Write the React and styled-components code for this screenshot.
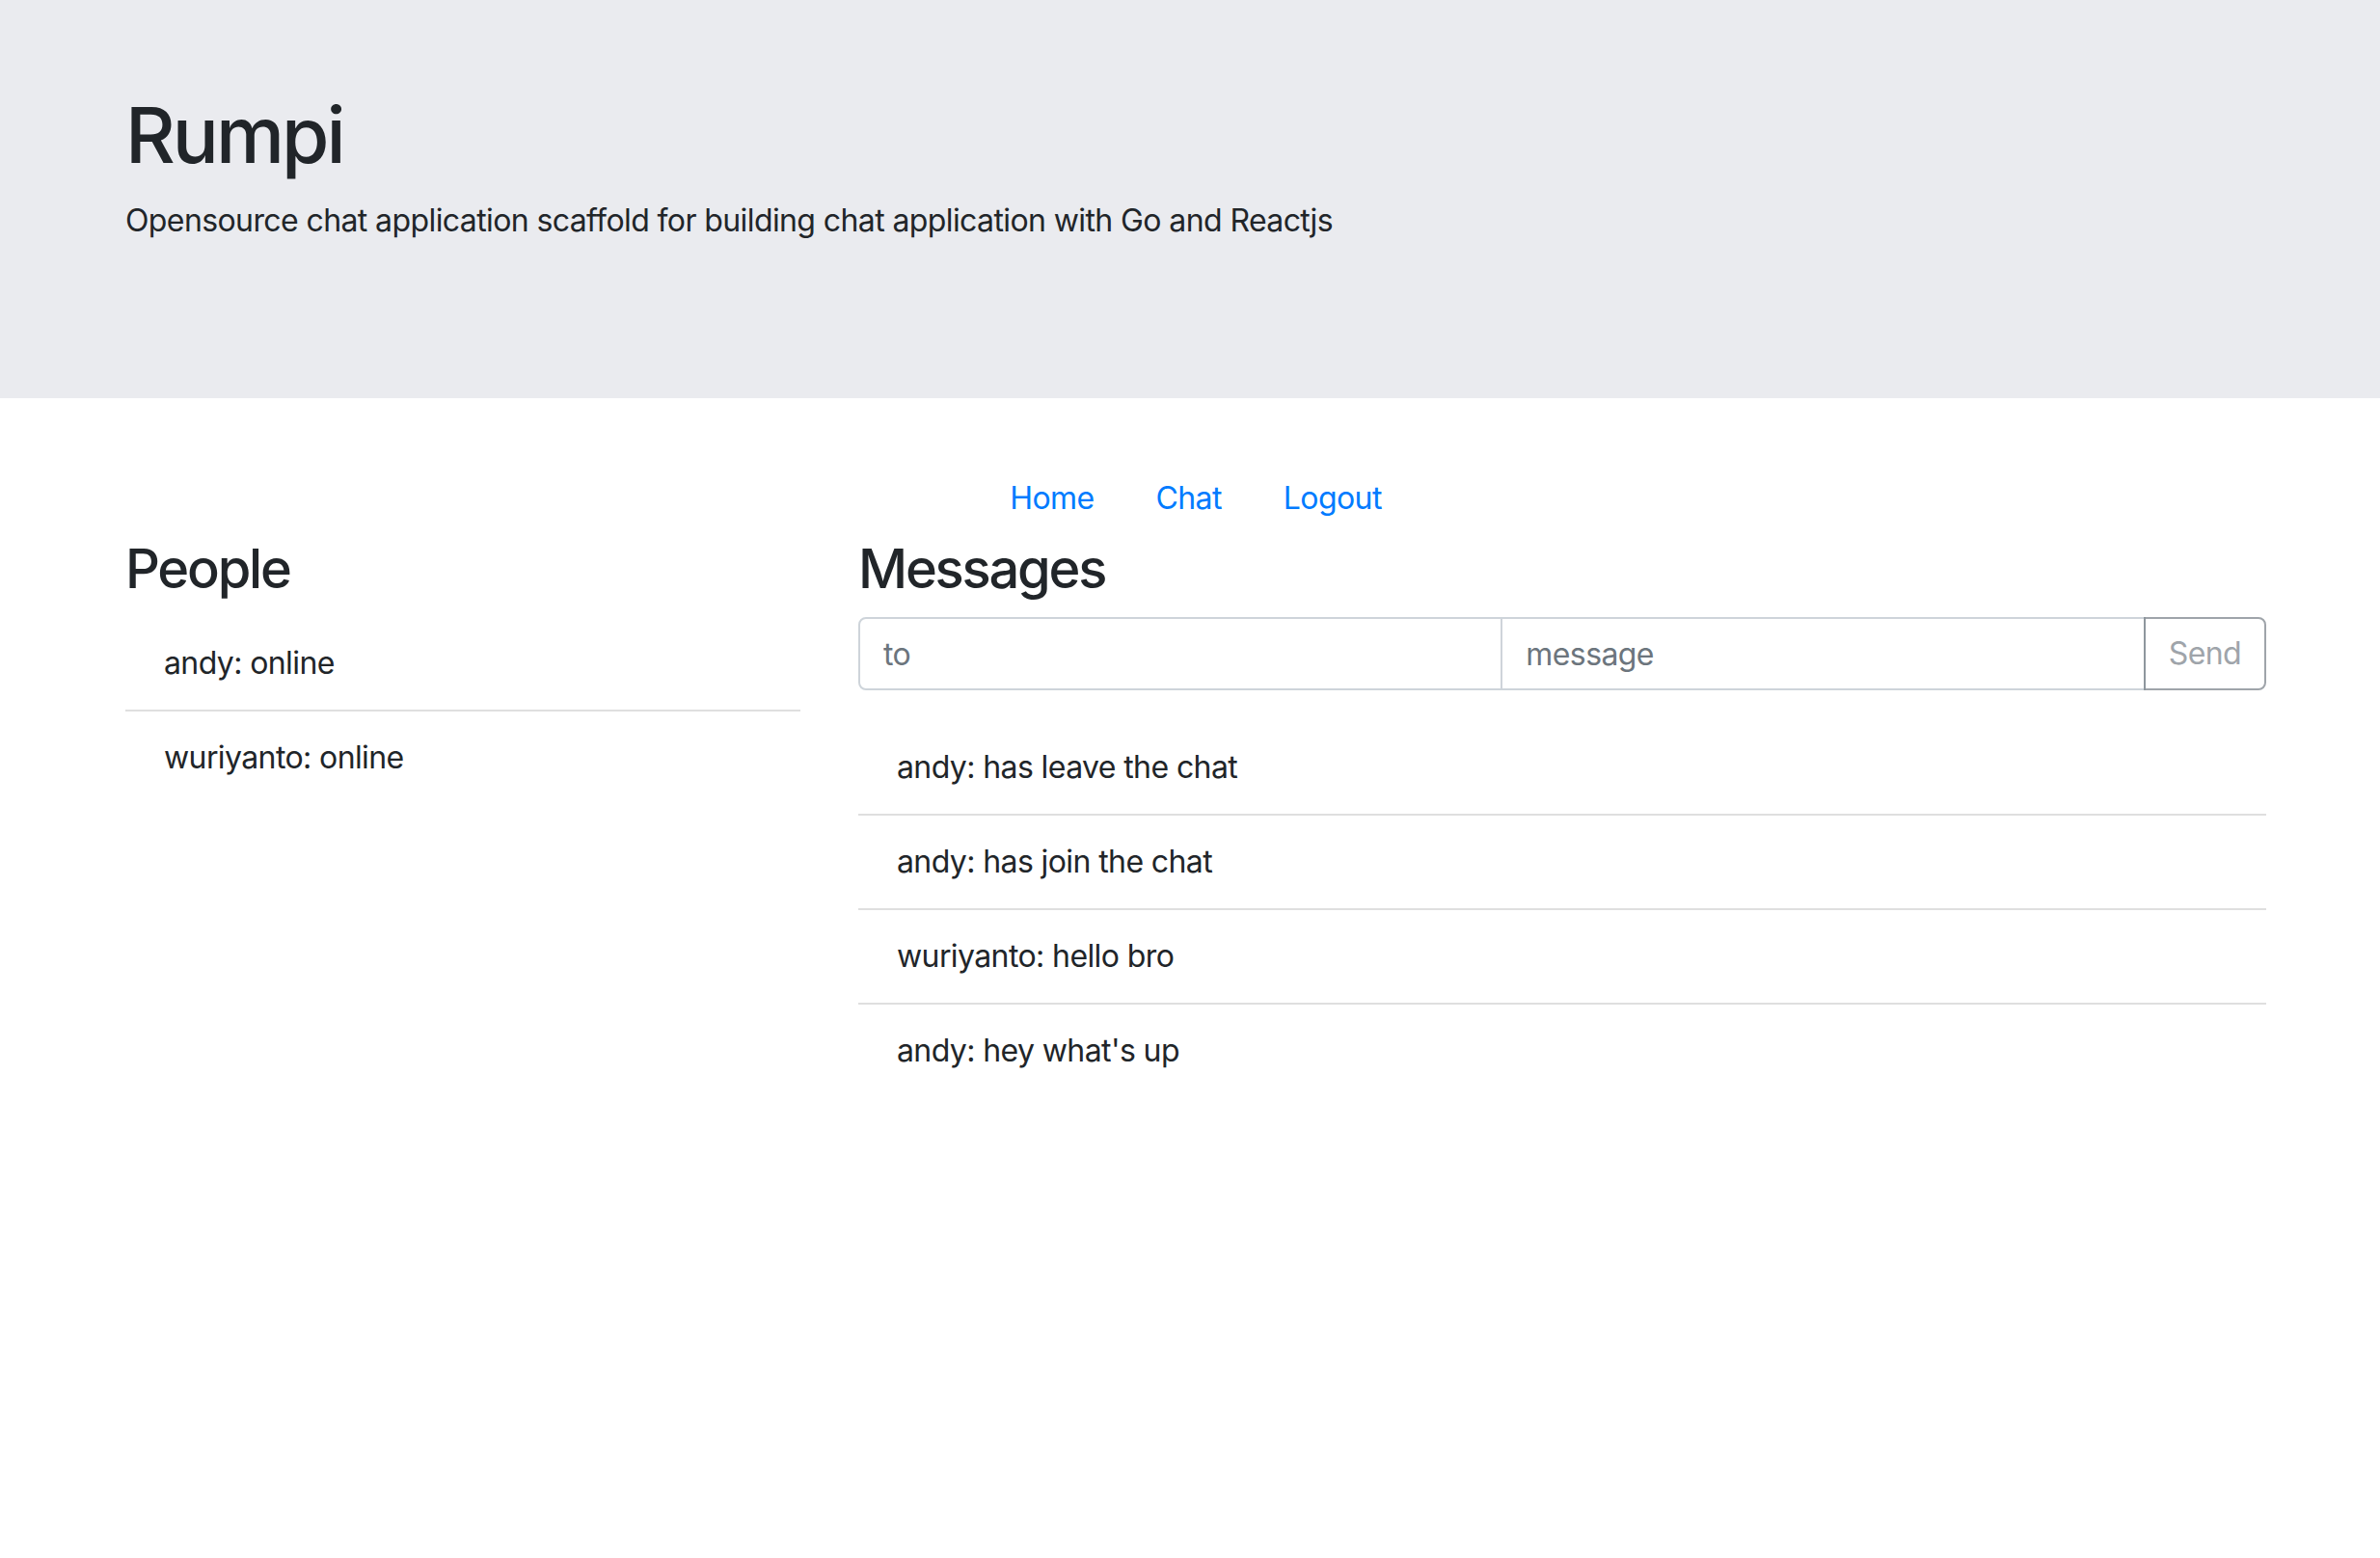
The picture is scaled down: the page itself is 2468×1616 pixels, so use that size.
import React from 'react';
import styled, { createGlobalStyle } from 'styled-components';

const GlobalStyle = createGlobalStyle`
  html, body {
    margin: 0;
    padding: 0;
    background: #fff;
  }

  body {
    font-family: Inter, "Liberation Sans", sans-serif;
    font-size: 32px;
    line-height: 1.5;
    color: #212529;
  }

  * { box-sizing: border-box; }
`

const Jumbotron = styled.header`
  background-color: #eaebef;
  padding: 92px 0 128px;
  margin-bottom: 64px;
`

// page is centred a few pixels right of the window centre in the reference
const Container = styled.div`
  max-width: 2280px;
  margin: 0 0 0 calc(50% - 1134px);
  padding: 0 30px;
`

const Title = styled.h1`
  font-size: 80px;
  font-weight: 500;
  line-height: 1.2;
  margin: 0 0 17px;
  letter-spacing: -3px;
`

const Lead = styled.p`
  margin: 0 0 32px;
  letter-spacing: -0.6px;
`

const Nav = styled.nav`
  display: flex;
  justify-content: center;

  > a {
    display: block;
    padding: 16px 32px;
    color: #007bff;
    text-decoration: none;
    letter-spacing: -0.6px;
  }
`

const Row = styled.div`
  display: flex;
  margin: 0 -30px;
`

const Col = styled.section`
  flex: 0 0 ${p => p.span / 12 * 100}%;
  max-width: ${p => p.span / 12 * 100}%;
  padding: 0 30px;
`

const Heading = styled.h2`
  font-size: 56px;
  font-weight: 500;
  line-height: 1.2;
  margin: 0 0 16px;
  letter-spacing: -2.2px;
`

const ListGroup = styled.ul`
  list-style: none;
  margin: 0;
  padding: 0;
`

const ListItem = styled.li`
  padding: 24px 40px;
  border-bottom: 2px solid rgba(0, 0, 0, 0.125);
  letter-spacing: -0.6px;

  &:last-child {
    border-bottom: 0;
  }
`

const InputGroup = styled.form`
  display: flex;
  margin-bottom: 32px;
`

const Input = styled.input`
  flex: 1 1 0;
  min-width: 0;
  height: 76px;
  padding: 12px 24px;
  font: inherit;
  letter-spacing: -0.6px;
  color: #495057;
  border: 2px solid #ced4da;
  border-radius: 0;
  margin-left: -2px;
  outline: none;

  &:first-child {
    margin-left: 0;
    border-radius: 8px 0 0 8px;
  }

  &::placeholder {
    color: #6c757d;
  }
`

const SendButton = styled.button`
  height: 76px;
  padding: 12px 24px;
  margin-left: -2px;
  font: inherit;
  letter-spacing: -0.6px;
  color: #6c757d;
  background: transparent;
  border: 2px solid #6c757d;
  border-radius: 0 8px 8px 0;
  opacity: 0.65;
`

const people = ['andy: online', 'wuriyanto: online'];

const messages = [
  'andy: has leave the chat',
  'andy: has join the chat',
  'wuriyanto: hello bro',
  "andy: hey what's up",
];

export default function App() {
  return (
    <>
      <GlobalStyle />
      <Jumbotron>
        <Container>
          <Title>Rumpi</Title>
          <Lead>Opensource chat application scaffold for building chat application with Go and Reactjs</Lead>
        </Container>
      </Jumbotron>
      <Container>
        <Nav>
          <a href='#home'>Home</a>
          <a href='#chat'>Chat</a>
          <a href='#logout'>Logout</a>
        </Nav>
        <Row>
          <Col span={4}>
            <Heading>People</Heading>
            <ListGroup>
              {people.map(p => <ListItem key={p}>{p}</ListItem>)}
            </ListGroup>
          </Col>
          <Col span={8}>
            <Heading>Messages</Heading>
            <InputGroup onSubmit={e => e.preventDefault()}>
              <Input type='text' placeholder='to' />
              <Input type='text' placeholder='message' />
              <SendButton type='submit' disabled>Send</SendButton>
            </InputGroup>
            <ListGroup>
              {messages.map(m => <ListItem key={m}>{m}</ListItem>)}
            </ListGroup>
          </Col>
        </Row>
      </Container>
    </>
  );
}
